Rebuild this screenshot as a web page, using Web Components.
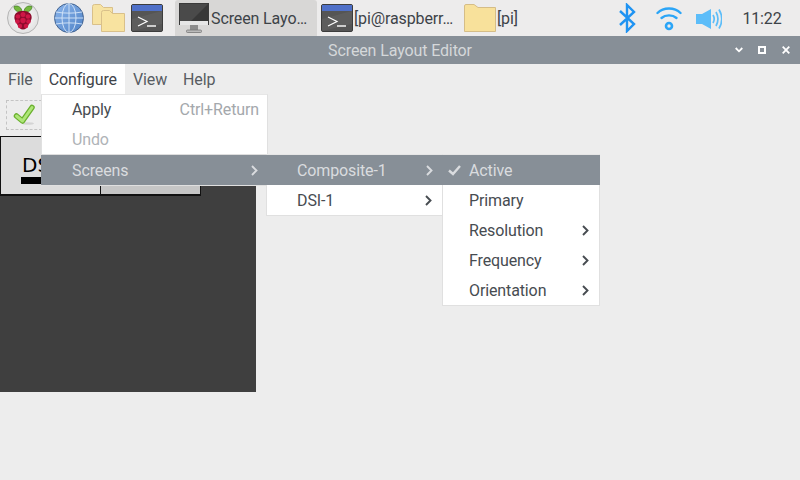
<!DOCTYPE html>
<html>
<head>
<meta charset="utf-8">
<title>Screen Layout Editor</title>
<style>
html, body{ margin:0; padding:0; width:800px; height:480px; overflow:hidden; background:#ededed; }
body{ font-family:Roboto,sans-serif; font-size:16px; letter-spacing:-0.12px; color:#474c51; display:flex; flex-direction:column; position:relative; }
</style>
</head>
<body>
<lx-panel></lx-panel>
<win-titlebar>Screen Layout Editor</win-titlebar>
<app-menubar></app-menubar>
<app-toolbar></app-toolbar>
<screen-canvas></screen-canvas>
<pop-menu style="left:41px;top:94px;width:227px" lift items='[{"t":"Apply","k":"Ctrl+Return"},{"t":"Undo","off":1,"sep":1},{"t":"Screens","sub":1,"on":1}]' pad="31"></pop-menu>
<pop-menu style="left:266px;top:154px;width:177px" items='[{"t":"Composite-1","sub":1,"on":1},{"t":"DSI-1","sub":1}]' pad="31"></pop-menu>
<pop-menu style="left:442px;top:154px;width:158px" items='[{"t":"Active","on":1,"check":1},{"t":"Primary"},{"t":"Resolution","sub":1},{"t":"Frequency","sub":1},{"t":"Orientation","sub":1}]' pad="27"></pop-menu>
<script>
const TERM = `<svg width="32" height="28" viewBox="0 0 32 28"><rect x=".5" y=".5" width="31" height="27" rx="1.5" fill="#555"  stroke="#3c3c3c"/><path d="M1 1h30v6H1z" fill="#4f70c8"/><path d="M1 15 L31 7 V20 L1 27z" fill="#fff" opacity=".05"/><path d="M7 13l9 4.500-9 4.500" fill="none" stroke="#fff" stroke-width="1.2"/><path d="M16 22h9" stroke="#fff" stroke-width="1.4"/></svg>`;

const ICONS = {
    berry: `<svg width="34" height="34" viewBox="0 0 34 34"><defs><radialGradient id="b" cx=".5" cy=".5" r=".6"><stop offset="0" stop-color="#fff"/><stop offset="1" stop-color="#dcdcdc"/></radialGradient></defs><circle cx="17" cy="17" r="15.5" fill="url(#b)" stroke="#b5b5b5"/><path d="M16.500 11.500C11 12 8 8.500 8 5.500 12 4 15.500 6 16.500 11.500zM17.500 11.500C23 12 26 8.500 26 5.500 22 4 18.500 6 17.500 11.500z" fill="#75b83f" stroke="#3e7a20" stroke-width=".7"/><path d="M17 10c5 0 8 2 8.500 5 .8 4-2 6-3 9-1 2.500-3 4.500-5.500 4.500s-4.500-2-5.500-4.500c-1-3-3.800-5-3-9C9 12 12 10 17 10z" fill="#8c0c2c"/><g fill="#cf1746"><circle cx="17" cy="13.500" r="2.500"/><circle cx="12" cy="15.500" r="2.300"/><circle cx="22" cy="15.500" r="2.300"/><circle cx="17" cy="19.500" r="2.700"/><circle cx="11.500" cy="20.500" r="2.300"/><circle cx="22.500" cy="20.500" r="2.300"/><circle cx="14" cy="25" r="2.200"/><circle cx="20" cy="25" r="2.200"/></g></svg>`,
    globe: `<svg width="30" height="30" viewBox="0 0 30 30"><defs><linearGradient id="g" x1="0" y1="0" x2="1" y2="1"><stop offset="0" stop-color="#8cb6ec"/><stop offset="1" stop-color="#4f82c6"/></linearGradient></defs><circle cx="15" cy="15" r="14.500" fill="url(#g)" stroke="#43638f"/><g fill="none" stroke="#d7e6f8" stroke-width=".9"><ellipse cx="15" cy="15" rx="7" ry="14.500"/><path d="M15 .5v29M2 9c7 1.500 19 1.500 26 0M.5 15h29M2 21c7-1.500 19-1.500 26 0"/></g></svg>`,
    folders: `<svg width="33" height="28" viewBox="0 0 33 28"><path d="M.5 2.500a2 2 0 0 1 2-2h6l3 3h9v17H.5z" fill="#f7e3a3" stroke="#d9c08a"/><path d="M9.500 8.500a2 2 0 0 1 2-2h6l3 3h12v18h-23z" fill="#f8e3a0" stroke="#d9c08a"/></svg>`,
    term: TERM,
    monitor: `<svg width="30" height="30" viewBox="0 0 30 30"><rect x=".5" y=".5" width="29" height="21" fill="#4a4a4a" stroke="#3a3a3a"/><path d="M12 18 L29 1 V18z" fill="#383838"/><rect x="1" y="18" width="28" height="4" fill="#e6e6e6"/><rect x="11" y="22" width="8" height="5" fill="#8c8c8c"/><rect x="7.500" y="27" width="15" height="2.500" rx="1" fill="#bbb" stroke="#777" stroke-width=".8"/></svg>`,
    bigfolder: `<svg width="32" height="28" viewBox="0 0 32 28"><path d="M.5 2a1.500 1.500 0 0 1 1.500-1.500h8l4 3h17.500v24H.5z" fill="#f8e19b" stroke="#d5bd87"/></svg>`,
    bt: `<svg width="18" height="30" viewBox="0 0 18 30"><path d="M2 8l14 13-7 7V2l7 7L2 22" fill="none" stroke="#1f93f2" stroke-width="2.400"/></svg>`,
    wifi: `<svg width="26" height="28" viewBox="0 0 26 28"><g fill="none" stroke="#2ba5f7" stroke-width="2.400" stroke-linecap="round"><path d="M1.500 9C7.500 3 18.500 3 24.500 9"/><path d="M5.500 14c4-3.500 11-3.500 15 0"/></g><circle cx="13" cy="22" r="3" fill="none" stroke="#2ba5f7" stroke-width="2.600"/></svg>`,
    vol: `<svg width="26" height="22" viewBox="0 0 26 22" style="margin-top:2px"><path d="M0 6h6L15 1v20L6 16H0z" fill="#5cbdf9"/><g fill="none" stroke="#5cbdf9" stroke-width="1.700"><path d="M17 7c1.500 2.500 1.500 5.500 0 8"/><path d="M20 4c2.500 4.500 2.500 9.500 0 14"/><path d="M23 1.500c3.500 6 3.500 13 0 19"/></g></svg>`,
    tick: `<svg width="24" height="24" viewBox="0 0 24 24"><ellipse cx="16" cy="20.500" rx="6" ry="1.300" fill="#000" opacity=".1"/><path d="M4.500 13l6 5 9.500-13.500" fill="none" stroke="#6ab02e" stroke-width="5.500" stroke-linejoin="round" stroke-linecap="round"/><path d="M4.500 13l6 5 9.500-13.500" fill="none" stroke="#aee678" stroke-width="3" stroke-linejoin="round" stroke-linecap="round"/></svg>`
};

class LxPanel extends HTMLElement{
    constructor(){
        super();
        this.shadow = this.attachShadow({mode: "open"});
    }
    connectedCallback(){
        this.shadow.innerHTML = `
        <style>
        :host{ display:flex; align-items:center; height:36px; flex:none; background:#edecec; color:#3d4348; font-size:16px; overflow:hidden; }
        .launch{ display:flex; align-items:center; flex:none; }
        .tray span{ display:flex; align-items:center; justify-content:center; }
        .task{ display:flex; align-items:center; height:36px; width:142px; box-sizing:border-box; flex:none; gap:1px; white-space:nowrap; padding-left:4px; }
        .task.on{ background:#d8d7d6; border-radius:3px 3px 0 0; gap:2px; }
        .tray{ margin-left:auto; display:flex; align-items:center; }
        .clock{ width:40px; margin-left:20px; margin-right:18px; color:#3d4348; }
        </style>
        <div class="launch" style="margin-left:6px;gap:14px">${ICONS.berry}${ICONS.globe}</div>
        <div class="launch" style="margin-left:8px;gap:6px">${ICONS.folders}${ICONS.term}</div>
        <div class="task on" style="margin-left:12px">${ICONS.monitor}<span>Screen Layo…</span></div>
        <div class="task" style="margin-left:4px;padding-left:0;width:143px">${TERM}<span>[pi@raspberr…</span></div>
        <div class="task" style="padding-left:0;width:100px">${ICONS.bigfolder}<span>[pi]</span></div>
        <div class="tray">
            <span style="margin-right:20px">${ICONS.bt}</span>
            <span style="margin-right:14px">${ICONS.wifi}</span>
            <span>${ICONS.vol}</span>
            <span class="clock">11:22</span>
        </div>
        `;
    }
}
customElements.define("lx-panel", LxPanel);

class WinTitlebar extends HTMLElement{
    constructor(){
        super();
        this.shadow = this.attachShadow({mode: "open"});
        this.shadow.innerHTML = `
        <style>
        :host{ display:flex; align-items:center; justify-content:center; height:28px; flex:none; background:#878f97; color:#d5d8da; font-size:16px; position:relative; }
        .btns{ position:absolute; right:0; top:0; height:28px; display:flex; align-items:center; }
        svg{ display:block; }
        </style>
        <slot></slot>
        <div class="btns">
            <svg width="8" height="6" viewBox="0 0 8 6" style="margin-right:15px"><path d="M.7 1l3.300 3.300L7.300 1" fill="none" stroke="#fff" stroke-width="1.800"/></svg>
            <svg width="8" height="8" viewBox="0 0 8 8" style="margin-right:16px"><rect x="1" y="1" width="6" height="6" fill="none" stroke="#fff" stroke-width="2"/></svg>
            <svg width="8" height="8" viewBox="0 0 8 8" style="margin-right:10px"><path d="M.7.700l6.600 6.600M7.300.700L.7 7.300" fill="none" stroke="#fff" stroke-width="1.800"/></svg>
        </div>
        `;
    }
}
customElements.define("win-titlebar", WinTitlebar);

class AppMenubar extends HTMLElement{
    constructor(){
        super();
        this.shadow = this.attachShadow({mode: "open"});
        this.shadow.innerHTML = `
        <style>
        :host{ display:flex; height:30px; flex:none; background:#ededed; font-size:16px; color:#575c62; }
        div{ display:flex; align-items:center; padding:0 8px; }
        .on{ background:#fff; color:#3f4449; }
        </style>
        <div>File</div><div class="on">Configure</div><div>View</div><div>Help</div>
        `;
    }
}
customElements.define("app-menubar", AppMenubar);

class AppToolbar extends HTMLElement{
    constructor(){
        super();
        this.shadow = this.attachShadow({mode: "open"});
        this.shadow.innerHTML = `
        <style>
        :host{ display:flex; align-items:flex-start; height:42px; flex:none; padding:6px 0 0 6px; box-sizing:border-box; }
        .btn{ width:36px; height:30px; box-sizing:border-box; border:1px dashed #c4c4c4; display:flex; align-items:center; padding-left:5px; }
        </style>
        <div class="btn">${ICONS.tick}</div>
        `;
    }
}
customElements.define("app-toolbar", AppToolbar);

class ScreenCanvas extends HTMLElement{
    constructor(){
        super();
        this.shadow = this.attachShadow({mode: "open"});
        this.shadow.innerHTML = `
        <style>
        :host{ display:block; width:256px; height:256px; flex:none; background:#3f3f3f; position:relative; }
        .scr{ position:absolute; top:0; height:60px; box-sizing:border-box; border:1px solid #111; border-bottom-width:2px; }
        .dsi{ left:0; width:101px; background:#dcdcdc; color:#000; font-size:22px; }
        .dsi span{ position:absolute; left:21px; top:17px; line-height:22px; font-family:"DejaVu Sans",sans-serif; font-size:20px; letter-spacing:0; }
        .dsi i{ position:absolute; left:20px; top:40px; width:60px; height:7px; background:#000; }
        .comp{ left:100px; width:101px; background:#c6c6c6; }
        </style>
        <div class="scr dsi"><span>DSI-1</span><i></i></div>
        <div class="scr comp"></div>
        `;
    }
}
customElements.define("screen-canvas", ScreenCanvas);

class PopMenu extends HTMLElement{
    constructor(){
        super();
        this.shadow = this.attachShadow({mode: "open"});
    }
    connectedCallback(){
        const items = JSON.parse(this.getAttribute("items"));
        const pad = this.getAttribute("pad");
        const lift = this.hasAttribute("lift");
        const rows = items.map(i => `
            <div class="row ${i.on ? "on" : ""} ${i.off ? "off" : ""} ${i.sep ? "sep" : ""} ${lift && !i.on ? "lift" : ""}">
                ${i.check ? `<svg class="check" width="13" height="11" viewBox="0 0 13 11"><path d="M1 5.500l4 3.500 7-8" fill="none" stroke="currentColor" stroke-width="2.400"/></svg>` : ""}
                <span>${i.t}</span>
                ${i.k ? `<em>${i.k}</em>` : ""}
                ${i.sub ? `<svg class="arrow" width="7" height="11" viewBox="0 0 7 11"><path d="M1 1l4.500 4.500L1 10" fill="none" stroke="currentColor" stroke-width="1.900"/></svg>` : ""}
            </div>`).join("");
        this.shadow.innerHTML = `
        <style>
        :host{ display:block; position:absolute; box-sizing:border-box; background:#fff; border:1px solid #e0e0e0; border-top:1px solid #e6e6e6; font-size:16px; color:#474c51; }
        .row{ height:30px; display:flex; align-items:center; padding-left:${pad - 1}px; padding-right:10px; position:relative; box-sizing:border-box; }
        .row.lift{ padding-bottom:2px; padding-right:8px; }
        .row.sep::after{ content:""; position:absolute; left:0; right:0; bottom:0; height:1px; background:#dedede; }
        .row.on{ background:#878f97; color:#dadcdf; margin:0 -1px; padding-left:${pad}px; padding-right:10px; }
        .row.off{ color:#afb3b7; }
        em{ font-style:normal; color:#a4a8ac; margin-left:auto; }
        .arrow{ margin-left:auto; }
        .check{ position:absolute; left:6px; top:10px; }
        </style>
        ${rows}
        `;
    }
}
customElements.define("pop-menu", PopMenu);
</script>
</body>
</html>
